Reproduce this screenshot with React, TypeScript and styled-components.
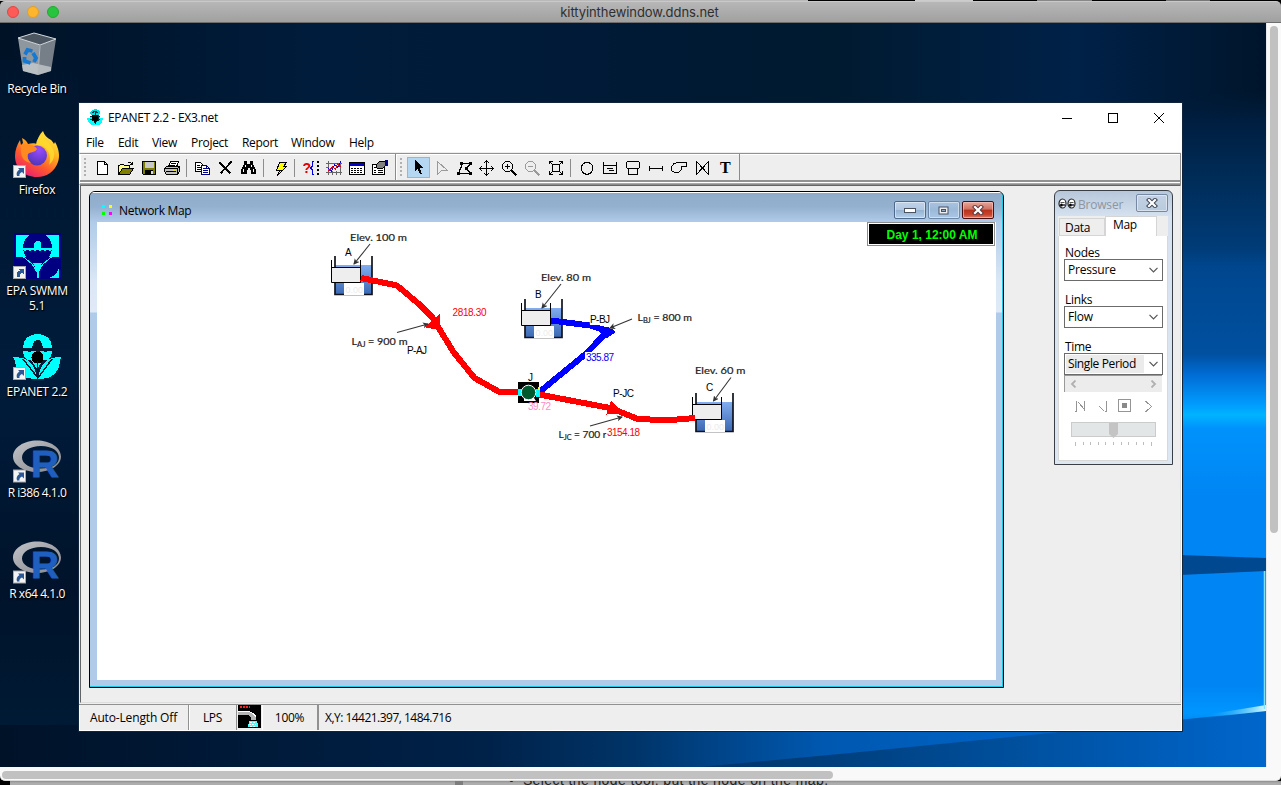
import React from 'react';
import styled, { createGlobalStyle } from 'styled-components';

const GlobalStyle = createGlobalStyle`
  * { box-sizing: border-box; }
  body { margin: 0; overflow: hidden; background: #000; }
`;

const ui = `"Open Sans", "Noto Sans", sans-serif`;

/* ---------- host screen ---------- */

const Screen = styled.div`
  width: 1281px;
  height: 785px;
  display: flex;
  flex-direction: column;
  overflow: hidden;
  background: #000;
  font-family: ${ui};
  font-size: 12px;
  color: #000;
`;

const TopSliver = styled.div`
  height: 1px;
  flex: none;
  background: linear-gradient(90deg, #b9b9b9 0 808px, #000 808px 915px, #ccc 915px 973px, #000 973px 1037px, #888 1037px 1092px, #000 1092px 1166px, #777 1166px 1210px, #000 1210px);
`;

const MacBar = styled.div`
  height: 22px;
  flex: none;
  display: flex;
  align-items: center;
  padding-left: 7px;
  border-radius: 5px 5px 0 0;
  border-top: 1px solid #c9c9c9;
  border-bottom: 1px solid #6e6e6e;
  background: linear-gradient(#b7b7b7, #a0a0a0);
`;

const Light = styled.span<{ $c: string; $b: string }>`
  width: 12px;
  height: 12px;
  margin-right: 8px;
  border-radius: 50%;
  background: ${(p) => p.$c};
  border: 1px solid ${(p) => p.$b};
`;

const MacTitle = styled.div`
  flex: 1;
  text-align: center;
  padding-right: 72px;
  margin-left: 3px;
  font: 13px Inter, sans-serif;
  letter-spacing: -0.07px;
  color: #2f2f2f;
`;

const Body = styled.div`
  height: 744px;
  flex: none;
  display: flex;
`;

const Desktop = styled.div`
  position: relative;
  width: 1266px;
  height: 744px;
  overflow: hidden;
`;

const VTrack = styled.div`
  width: 15px;
  background: #f9f9f9;
  border-left: 1px solid #e9e9e9;
  padding: 3px 3px;
`;

const VThumb = styled.div`
  width: 8px;
  height: 507px;
  border-radius: 4px;
  background: #c1c1c1;
`;

const HTrack = styled.div`
  height: 14px;
  flex: none;
  background: #f9f9f9;
  border-bottom: 1px solid #dcdcdc;
  border-radius: 0 0 5px 5px;
  padding: 4px 2px;
`;

const HThumb = styled.div`
  width: 831px;
  height: 8px;
  border-radius: 4px;
  background: #c1c1c1;
`;

const Under = styled.div`
  height: 4px;
  flex: none;
  margin-left: 10px;
  overflow: hidden;
  display: flex;
  align-items: flex-end;
  background: linear-gradient(#8d8d8d, #adadad 2px);
`;

const UnderDivider = styled.div`
  width: 8px;
  height: 4px;
  margin-left: 445px;
  background: #7d7d7d;
`;

const UnderText = styled.div`
  margin-left: 46px;
  white-space: pre;
  font: 14px/14px "Liberation Sans", sans-serif;
  letter-spacing: 0.4px;
  color: #222;
  margin-bottom: -2px;
`;

/* ---------- desktop icons ---------- */

const IconColumn = styled.div`
  position: relative;
  display: flex;
  flex-direction: column;
  width: 74px;
  padding-top: 7px;
`;

const IconCell = styled.div`
  height: 101px;
  display: flex;
  flex-direction: column;
  align-items: center;
`;

const IconLabel = styled.div<{ $ls?: number }>`
  margin-top: 3px;
  text-align: center;
  line-height: 15px;
  color: #fff;
  white-space: pre-line;
  letter-spacing: ${(p) => p.$ls ?? -0.3}px;
  text-shadow: 1px 1px 1px #000, 0 1px 2px #000;
`;

const Shortcut = ({ y = 0 }: { y?: number }) => (
  <g transform={`translate(0 ${y})`}>
    <rect x="0.5" y="34.5" width="12" height="12" fill="#f4f4f4" stroke="#a8a8a8" />
    <path d="M5 37h6v6l-2-2c-2 1-3 2-2.500 4h-2.500c-1-3 0-5 2.500-6.500z" fill="#2b5797" />
  </g>
);

const RecycleBin = () => (
  <svg width="48" height="48" viewBox="0 0 48 48">
    <path d="M5 8 L27 15 L25 45 L10 41z" fill="#8e969e" />
    <path d="M27 15 L43 9 L38 41 L25 45z" fill="#767e87" />
    <path d="M5 8 L21 3 L43 9 L27 15z" fill="#4c5660" stroke="#d4d9dd" strokeWidth="1" />
    <path d="M9 35 L20 33 L38 37 L38 41 L25 45 L10 41z" fill="#c9cdd0" opacity=".75" />
    <path d="M25 44 L27 16" stroke="#b5bbc0" strokeWidth="1" />
    <g fill="none" stroke="#1579d3" strokeWidth="3.800">
      <path d="M12 24.500 l2.500-4.500 5 1" />
      <path d="M20 23 l3 5 -2 4" />
      <path d="M17.500 33 l-6-2 0-4" />
    </g>
  </svg>
);

const Firefox = () => (
  <svg width="48" height="48" viewBox="0 0 48 48">
    <defs>
      <linearGradient id="ffa" x1=".8" y1="0" x2=".2" y2="1">
        <stop offset="0" stopColor="#fff24a" />
        <stop offset=".35" stopColor="#ffb31f" />
        <stop offset=".65" stopColor="#ff5a2c" />
        <stop offset="1" stopColor="#e6177a" />
      </linearGradient>
      <radialGradient id="ffb" cx=".6" cy=".2" r=".8">
        <stop offset="0" stopColor="#9a4bff" />
        <stop offset="1" stopColor="#5136b8" />
      </radialGradient>
    </defs>
    <path d="M30 0c1 4 4 7 8 9 1 1 2 2 3 4l1-2c4 7 5 14 3 20-3 9-11 15-21 15C11 46 2 37 2 25c0-6 2-11 5-16l1 5 2-2-1-5c4 2 5 4 6 6 3-1 7-1 9 0 0-5 3-10 6-13z" fill="url(#ffa)" />
    <circle cx="24" cy="24.500" r="10" fill="url(#ffb)" />
    <path d="M8 14c6-2 14 0 16 4-2 4-8 3-9 5-1 3 0 6 3 9-6-1-10-5-10-11z" fill="#ff8a1f" />
    <path d="M30 2c0 7 9 10 11 19 1 6-2 10-5 13 2-6 1-14-5-18-3-2-6-2-8-2 0-4 3-9 7-12z" fill="#ffd92e" opacity=".85" />
    <Shortcut />
  </svg>
);

const Swmm = () => (
  <svg width="48" height="48" viewBox="0 0 48 48" shapeRendering="crispEdges">
    <rect x="1" y="1" width="47" height="46" fill="#000080" />
    <path d="M3 3h43v22H3z" fill="#0ff" />
    <path d="M3 25h6l12 6h7l12-6h6v-1l-43 0zM3 24h43v2c-8 1-14 6-18 11l-3 9h-1l-3-9C17 31 11 27 3 26z" fill="#000080" />
    <circle cx="24.500" cy="15.500" r="14.500" fill="#000080" />
    <path d="M10 16h11v-5l2-2h3l2 2v5h11v2h-1v1h-2v-1h-3v1h-2v-1h-3v1h-2v-1h-3v1h-2v-1h-3v1h-2v-1h-3v1h-2v-1h-1z" fill="#0ff" />
    <path d="M8 23l5 4 6 5 5 8M41 23l-5 4-6 5-5 8" stroke="#0ff" strokeWidth="1" fill="none" />
    <path d="M20 31h9l-3 9v6h-2v-6z" fill="#0ff" />
    <path d="M46 35v11H36c5-2 9-5 10-11z" fill="#0ff" />
    <Shortcut />
  </svg>
);

const EpaFlower = () => (
  <g shapeRendering="crispEdges">
    <path d="M10 15C10 6 16 1 24.500 1S39 6 39 15h-9l-2-7h-7l-2 7z" fill="#0ff" />
    <path d="M10 18h5v1h3v-1h13v1h3v-1h5c0 4-2 7-4 9h-5l-6 9-6-9h-4c-2-2-4-5-4-9z" fill="#0ff" />
    <path d="M0 24c14 0 22 5 24 22-14 1-22-7-22-18zM48 24c-13 0-21 5-23 22 14 1 22-7 22-18z" fill="#0ff" />
    <path d="M21 15v-6l2-2h3l2 2v8l-3 3-4-3z" fill="#06182c" />
    <circle cx="24.500" cy="24.500" r="6" fill="#000" />
    <path d="M10 26l15 19M39 26L25 45M24.500 28v18" stroke="#06182c" strokeWidth="1.500" fill="none" />
  </g>
);

const Epanet = () => (
  <svg width="48" height="48" viewBox="0 0 48 48">
    <EpaFlower />
    <Shortcut />
  </svg>
);

const TitleFlower = () => (
  <svg width="16" height="17" viewBox="0 0 16 17" shapeRendering="crispEdges">
    <path d="M3 5V3l2-2 3-1 3 1 2 2v2l-2 1H5z" fill="#0dd" />
    <path d="M0 9h3l1-2h8l1 2h3l-1 4-3 3H4l-3-3z" fill="#0ff" />
    <path d="M5 6h6v5H9v2H7v-2H5zM8 3v12M3 10l3 2M13 10l-3 2" fill="#000" stroke="#000" strokeWidth=".8" />
    <path d="M5 4l3-2 3 2M3 7h2M11 7h2" stroke="#035" fill="none" />
  </svg>
);

const LogoSvg = styled.svg`
  overflow: visible;
`;

const RLogo = () => (
  <LogoSvg width="48" height="48" viewBox="0 1.500 48 48">
    <defs>
      <linearGradient id="rg" x1="0" y1="0" x2="1" y2="1">
        <stop offset="0" stopColor="#c2c4c9" />
        <stop offset="1" stopColor="#84868c" />
      </linearGradient>
    </defs>
    <path fillRule="evenodd" d="M24 8c13 0 24 7 24 16s-11 15.500-24 15.500S0 33 0 24 11 8 24 8zM28 13.500c-11 0-19 5-19 11.500s8 11 19 11 18-4.500 18-11-7-11.500-18-11.500z" fill="url(#rg)" />
    <text x="18" y="44.500" textLength="28" lengthAdjust="spacingAndGlyphs" fontFamily="Liberation Sans, sans-serif" fontWeight="700" fontSize="37" fill="#1f5fbf" stroke="#1f5fbf" strokeWidth=".8">R</text>
    <Shortcut y={3} />
  </LogoSvg>
);

const Wallpaper = styled.svg`
  position: absolute;
  inset: 0;
`;

const Backdrop = () => (
  <Wallpaper width="1266" height="744" viewBox="0 23 1266 744">
    <defs>
      <linearGradient id="top" x1="0" x2="1">
        <stop offset="0" stopColor="#001226" />
        <stop offset=".25" stopColor="#001c3c" />
        <stop offset=".5" stopColor="#001a36" />
        <stop offset=".66" stopColor="#001a30" />
        <stop offset=".85" stopColor="#002148" />
        <stop offset="1" stopColor="#00152b" />
      </linearGradient>
      <linearGradient id="left" x1="0" x2="0" y1="0" y2="1">
        <stop offset="0" stopColor="#00152c" />
        <stop offset=".45" stopColor="#001c3c" />
        <stop offset=".75" stopColor="#00132a" />
        <stop offset="1" stopColor="#001c38" />
      </linearGradient>
      <linearGradient id="right" gradientUnits="userSpaceOnUse" x1="0" x2="0" y1="90" y2="767">
        <stop offset="0" stopColor="#001a35" stopOpacity="0" />
        <stop offset=".04" stopColor="#001d3e" />
        <stop offset=".13" stopColor="#002c58" />
        <stop offset=".235" stopColor="#003c78" />
        <stop offset=".26" stopColor="#00468e" />
        <stop offset=".39" stopColor="#0050a0" />
        <stop offset=".42" stopColor="#006cd4" />
        <stop offset=".465" stopColor="#009cff" />
        <stop offset=".48" stopColor="#00b4ff" />
        <stop offset=".5" stopColor="#0092fc" />
        <stop offset=".6" stopColor="#0086f4" />
        <stop offset=".88" stopColor="#0086f4" />
        <stop offset=".92" stopColor="#0096ff" />
        <stop offset=".95" stopColor="#0076e2" />
        <stop offset="1" stopColor="#0058b0" />
      </linearGradient>
      <linearGradient id="bottom" x1="0" x2="1">
        <stop offset="0" stopColor="#001228" />
        <stop offset=".38" stopColor="#002148" />
        <stop offset=".5" stopColor="#003468" />
        <stop offset=".65" stopColor="#0058b0" />
        <stop offset=".8" stopColor="#0062c4" />
        <stop offset="1" stopColor="#0074e0" />
      </linearGradient>
      <linearGradient id="beam" x1="0" x2="1">
        <stop offset="0" stopColor="#003468" />
        <stop offset=".45" stopColor="#004a92" />
        <stop offset="1" stopColor="#0066cc" />
      </linearGradient>
      <linearGradient id="flare" x1="0" x2="1">
        <stop offset="0" stopColor="#00a8ff" stopOpacity="0" />
        <stop offset="1" stopColor="#d8fbff" />
      </linearGradient>
    </defs>
    <rect y="23" width="1266" height="744" fill="url(#left)" />
    <rect y="23" width="1266" height="120" fill="url(#top)" />
    <rect x="0" y="60" width="79" height="707" fill="url(#left)" />
    <rect y="725" width="1266" height="42" fill="url(#bottom)" />
    <rect x="1180" y="90" width="86" height="677" fill="url(#right)" />
    <path d="M700 767L850 753 1050 733 1266 711V767z" fill="url(#beam)" />
    <path d="M1180 555l86 3v13l-86 4z" fill="#00488f" />
    <path d="M1205 715L1266 705v6L1205 718z" fill="url(#flare)" />
    <path d="M1264.500 571v138" stroke="#7fe0ff" strokeWidth="1.500" />
  </Wallpaper>
);

/* ---------- application window ---------- */

const AppWindow = styled.div`
  position: absolute;
  left: 79px;
  top: 80px;
  width: 1103px;
  height: 628px;
  display: flex;
  flex-direction: column;
  background: #eee;
  border-right: 1px solid #fff;
  border-bottom: 1px solid #fff;
  box-shadow: 0 0 0 1px #10243c;
`;

const TitleBar = styled.div`
  height: 29px;
  flex: none;
  display: flex;
  align-items: center;
  padding-left: 8px;
  background: #fff;
`;

const Text = styled.span<{ $ls?: number; $w?: number; $c?: string }>`
  white-space: pre;
  letter-spacing: ${(p) => p.$ls ?? -0.3}px;
  ${(p) => (p.$w ? `width: ${p.$w}px; flex: none;` : '')}
  ${(p) => (p.$c ? `color: ${p.$c};` : '')}
`;

const TitleText = styled(Text)`
  margin-left: 5px;
`;

const CaptionButtons = styled.div`
  margin-left: auto;
  margin-right: -1px;
  display: flex;
`;

const CaptionButton = styled.div`
  width: 46px;
  height: 28px;
  display: flex;
  align-items: center;
  justify-content: center;
`;

const MenuBar = styled.div`
  height: 20px;
  flex: none;
  display: flex;
  align-items: center;
  padding: 1px 0 0 7px;
  background: #fff;
`;

const ToolBand = styled.div`
  height: 32px;
  flex: none;
  margin-top: 1px;
  display: flex;
  align-items: flex-start;
  border-top: 1px solid #919191;
  border-left: 1px solid #fff;
  border-bottom: 1px solid #8b8b8b;
  border-right: 1px solid #919191;
  padding-bottom: 1px;
  background: linear-gradient(#fff 1px, #eee 1px 26px, #919191 26px 28px, #fff 28px 29px, #aaa 29px);
`;

const ToolGroup = styled.div<{ $tight?: boolean }>`
  height: 26px;
  display: flex;
  align-items: flex-start;
  padding: 3px ${(p) => (p.$tight ? 3 : 4)}px 0 3px;
  border-right: 1px solid #8b8b8b;
  box-shadow: inset 1px 0 0 #fff;
`;

const Grip = styled.div`
  width: 2px;
  height: 19px;
  margin: 1px 5px 0 1px;
  background: repeating-linear-gradient(#b0b0b0 0 2px, transparent 2px 4px);
`;

const ToolButton = styled.div<{ $on?: boolean; $slim?: boolean }>`
  width: ${(p) => (p.$slim ? 22 : 23)}px;
  height: 21px;
  display: flex;
  align-items: center;
  justify-content: center;
  background: ${(p) => (p.$on ? '#b5d7f1' : 'transparent')};
  box-shadow: ${(p) => (p.$on ? 'inset 0 0 0 1px #86bbe9' : 'none')};
`;

const ToolSep = styled.div`
  width: 8px;
  height: 18px;
  margin-top: 2px;
  background: linear-gradient(90deg, transparent 3px, #8d8d8d 3px 4px, transparent 4px);
`;

const K = '#000';
const G = '#9a9a9a';

const Lines = ({ d, c = K, w = 1, f = 'none' }: { d: string; c?: string; w?: number; f?: string }) => (
  <path d={d} stroke={c} strokeWidth={w} fill={f} />
);

const toolIcons: Record<string, React.ReactNode> = {
  new: <Lines d="M2.500 1.500h7l3 3v10h-10zM9.500 1.500v3h3" f="#fff" />,
  open: (
    <>
      <Lines d="M.5 13.500v-8h1l1-1h3l1 1h5v3" f="#ffff80" />
      <Lines d="M.5 14.500l4-6h11l-4 6z" f="#808000" />
      <Lines d="M9.500 3.500l1-1h2l2 2M14.500 1.500v3h-3" />
    </>
  ),
  save: (
    <>
      <Lines d="M1.500 1.500h13v13h-12l-1-1z" f="#808000" />
      <rect x="4" y="2" width="9" height="6" fill="#c8c8c8" />
      <rect x="4" y="10" width="8" height="4" fill="#000" />
      <rect x="10" y="11" width="2" height="3" fill="#ddd" />
    </>
  ),
  print: (
    <>
      <Lines d="M4.500 7l2-5.500h8l-2 5.500" f="#fff" />
      <Lines d="M7 3.500h5M6 5.500h5" />
      <Lines d="M.5 8.500l2-2h12l1 2v3l-2 3h-11l-2-3z" f="#c0c0c0" />
      <Lines d="M.5 8.500h13v6M2 11.500h10M13.500 8.500l2-2" />
      <rect x="9" y="10" width="2" height="1" fill="#e8e800" />
    </>
  ),
  copy: (
    <>
      <Lines d="M.5 2.500h5l3 3v6h-8z" f="#fff" />
      <Lines d="M2 5.500h3M2 7.500h5M2 9.500h5" />
      <Lines d="M6.500 5.500h5l3 3v6h-8z" c="#000080" f="#fff" />
      <Lines d="M8 8.500h3M8 10.500h5M8 12.500h5M11.500 5.500v3h3" c="#000080" />
    </>
  ),
  del: <Lines d="M1.500 2.500l11 11M13.500 1.500L2.500 13.500" w={1.7} />,
  find: (
    <>
      <path d="M3 1h3v3h3V1h3v3l3 6v4h-5v-4h-1V8H7v2H6v4H0v-4l3-6z" fill="#000" />
      <path d="M4 5h1v2H4zM2 9h1v3H2zM10 5h1v2h-1zM12 9h1v3h-1z" fill="#fff" />
    </>
  ),
  run: (
    <>
      <Lines d="M7.500 2.500h7l-3 4h3l-9 9 2-5h-3z" f="#ffff00" />
      <Lines d="M14.500 3v-1M8 10.500h3" />
    </>
  ),
  query: (
    <>
      <text x="-.5" y="13" fontFamily="Liberation Sans, sans-serif" fontWeight="700" fontSize="14" fill="#e00000">?</text>
      <Lines d="M11 1.500h-2v5l-1.500 1.500 1.500 1.500v5h2" c="#0000e0" />
      <path d="M14 1h2v2h-2zM14 5h2v2h-2zM14 9h2v2h-2zM14 13h2v2h-2z" fill="#000" />
    </>
  ),
  graph: (
    <>
      <Lines d="M2.500 1v14M0 12.500h16M0 3.500h16M0 7.500h2M6.500 11v4M10.500 11v4M14.500 1v14" c="#666" />
      <Lines d="M2.500 8.500l3 3 3-7 3 3 3.500-6" c="#0000d8" />
      <Lines d="M2.500 11l4-4 3 2 2-5 3 3" c="#e00000" />
    </>
  ),
  table: (
    <>
      <rect x=".5" y="2.500" width="15" height="12" fill="#fff" stroke="#000" />
      <rect x="1" y="3" width="14" height="3" fill="#0000c8" />
      <path d="M2 8.500h12M2 10.500h12M2 12.500h12" stroke="#000" strokeDasharray="2 1" />
    </>
  ),
  options: (
    <>
      <Lines d="M.5 4.500h12v10h-12z" f="#fff" />
      <Lines d="M2 7.500h2M2 10.500h2M2 12.500h2M6 10.500h5M6 12.500h5" />
      <path d="M4 5l4-4h5v5l-2 2H7L5 8z" fill="#808080" stroke="#000" />
      <rect x="13" y="0" width="3" height="6" fill="#000080" />
    </>
  ),
  pick: <path d="M4 0v11l2.500-2.500L9 14h2L9 8h3z" fill="#000" />,
  vertex: <Lines d="M3.500 1.500v13l4-4h6z" c={G} />,
  region: (
    <>
      <Lines d="M4.500 3.500h9l-4 5 4 5h-12l4-10" w={1.300} />
      <path d="M3 2h3v3H3zM12 2h3v3h-3zM8 7h3v3H8zM12 12h3v3h-3zM0 12h3v3H0z" fill="#000" />
    </>
  ),
  pan: <Lines d="M7.500 0.500v15M0 8.500h15M5 3l2.500-2.500L10 3M5 13l2.500 2.500L10 13M3 6L.5 8.500 3 11M12 6l2.500 2.500L12 11" />,
  zin: (
    <>
      <Lines d="M3.500 1.500h4l3 3v4l-3 3h-4l-3-3v-4zM5.500 4v5M3 6.500h5" />
      <Lines d="M9.500 10.500l5 5" w={2.400} />
    </>
  ),
  zout: (
    <>
      <Lines d="M3.500 1.500h4l3 3v4l-3 3h-4l-3-3v-4zM3 6.500h5" c={G} />
      <Lines d="M9.500 10.500l5 5" w={2.400} c={G} />
    </>
  ),
  full: (
    <>
      <Lines d="M4.500 4.500h7v7h-7z" />
      <Lines d="M1.500 4v-2.500h3M11 1.500h3.500V4M1.500 11v3.500h3M11 14.500h3.500V11M1.500 1.500l3 3M14.500 1.500l-3 3M1.500 14.500l3-3M14.500 14.500l-3-3" />
    </>
  ),
  junction: <Lines d="M6.500 2.500h3l2 1 2 2 .5 3-.5 2-2 2.500-2 1h-3l-2-1-2-2.500V6l2-2.500z" />,
  reservoir: <Lines d="M1.500 2v11.500h13V2M1 5.500h13M5 8.500h6M7 10.500h5" />,
  tank: <Lines d="M2.500 1.500h11l1 1v5l-1 1h-11l-1-1v-5zM3.500 9v5.500h9V9" />,
  pipe: <Lines d="M1.500 5.500v5M1.500 8h12M14.500 5.500v5" />,
  pump: <Lines d="M6.500 2.500h9v4h-5v3l-3 3h-4l-3-2V7l2-3z" />,
  valve: <Lines d="M2.500 1.500v13l6-6.500 6 6.500v-13L8.500 8z" />,
  text: (
    <text x="3" y="13" fontFamily="Liberation Serif, serif" fontWeight="700" fontSize="16" fill="#000">T</text>
  ),
};

const Tool = ({ name, on }: { name: string; on?: boolean }) => (
  <ToolButton $on={on} $slim={name === 'pan'}>
    <svg width="16" height="16" viewBox="0 0 16 16" shapeRendering="crispEdges">{toolIcons[name]}</svg>
  </ToolButton>
);

const Tools = ({ names, active }: { names: string[]; active?: string }) => (
  <ToolGroup $tight={!!active}>
    <Grip />
    {names.map((n, i) => (n === '|' ? <ToolSep key={i} /> : <Tool key={i} name={n} on={n === active} />))}
  </ToolGroup>
);

const Client = styled.div`
  position: relative;
  flex: 1;
  margin-left: 1px;
  border-top: 1px solid #646464;
  border-left: 1px solid #646464;
  border-bottom: 1px solid #ddd;
  border-right: 1px solid #ddd;
`;

/* ---------- network map child window ---------- */

const MapWindow = styled.div`
  position: absolute;
  left: 8px;
  top: 5px;
  width: 915px;
  height: 497px;
  display: flex;
  flex-direction: column;
  border: 1px solid #000;
  border-radius: 6px 6px 0 0;
  overflow: hidden;
  background: linear-gradient(#fff 0 1px, #8eacca 1px, #b0cbe9 30px, #dbe7f5 90px, #e0eaf7 120px, #b0cbe9 121px);
  box-shadow: inset -1px -1px 0 #1cc8e8;
`;

const Frame = styled.div`
  flex: 1;
  display: flex;
  flex-direction: column;
  border-right: 1px solid #1cc8e8;
  border-bottom: 1px solid #1cc8e8;
`;

const MapTitle = styled.div`
  height: 30px;
  flex: none;
  display: flex;
  align-items: flex-start;
  padding: 9px 8px 0 10px;
  background: linear-gradient(#fff 0 1px, #8eacca 1px, #94b1cf 50%, #b0cbe9);
`;

const MapTitleText = styled(Text)`
  margin: 1px 0 0 6px;
`;

const WinButtons = styled.div`
  margin-left: auto;
  display: flex;
  gap: 2px;
`;

const WinButton = styled.div<{ $kind?: 'close' | 'flat' }>`
  width: 32px;
  height: 18px;
  display: flex;
  align-items: center;
  justify-content: center;
  border: 1px solid ${(p) => (p.$kind === 'close' ? '#4a0d12' : p.$kind === 'flat' ? '#6c87a8' : '#4d6a8d')};
  border-radius: 2px;
  box-shadow: inset 0 0 0 1px ${(p) => (p.$kind === 'close' ? 'rgba(255,200,190,.6)' : 'rgba(255,255,255,.45)')};
  background: ${(p) =>
    p.$kind === 'close'
      ? 'linear-gradient(#e5a79b, #d1705f 45%, #b8301b 50%, #c8452d 80%, #d98070)'
      : p.$kind === 'flat'
      ? 'linear-gradient(#a9c3e0, #9cb9d9 50%, #a9c6e6)'
      : 'linear-gradient(#bfd3ea, #b0c8e3 48%, #94b1d1 50%, #b4cfec)'};
`;

const Canvas = styled.div`
  height: 458px;
  flex: none;
  margin: 0 6px 0 7px;
  background: #fff;
  position: relative;
`;

const DayLabel = styled.div`
  position: absolute;
  right: 1px;
  top: 0;
  width: 128px;
  height: 24px;
  display: flex;
  align-items: center;
  justify-content: center;
  padding: 1px 0 0 2px;
  border: 1px solid #8c8c8c;
  box-shadow: inset 0 0 0 1px #fff;
  background: #000;
  color: #0f0;
  font: bold 12px "Liberation Sans", sans-serif;
`;

const Diagram = styled.svg`
  display: block;
`;

const Tank = ({ x, y }: { x: number; y: number }) => (
  <g transform={`translate(${x} ${y})`}>
    <rect x="4" y="9" width="37" height="29" fill="url(#water)" />
    <path d="M4 0v38.500h37V0" fill="none" stroke="#10131c" strokeWidth="1.700" />
    <rect x="13" y="27" width="20" height="12" fill="#fff" />
    <text x="14.500" y="36.500" fontSize="9" fill="#ececec" textLength="17.500">0.00</text>
    <path d="M.5 4v22.500h29V4M.5 11.500h29" fill="none" stroke="#000" />
    <rect x="1" y="12" width="28" height="14" fill="#eee" />
  </g>
);

const Note = ({ x, y, w, t, sub, rest }: { x: number; y: number; w: number; t: string; sub?: string; rest?: string }) => (
  <text x={x} y={y} textLength={w} lengthAdjust="spacingAndGlyphs" fontFamily="Lato, sans-serif" fontSize="10" fill="#222" stroke="#222" strokeWidth=".2">
    {t}
    {sub && <tspan fontSize="7" dy="2">{sub}</tspan>}
    {rest && <tspan dy="-2">{rest}</tspan>}
  </text>
);

const Arrow = ({ d }: { d: string }) => <path d={d} stroke="#333" strokeWidth="1.100" fill="none" markerEnd="url(#tip)" />;

const Network = () => (
  <Diagram width="899" height="458" viewBox="97 222 899 458" fontFamily="Liberation Sans, sans-serif" fontSize="10">
    <defs>
      <linearGradient id="water" x1="0" x2="0" y1="0" y2="1">
        <stop offset="0" stopColor="#82adf0" />
        <stop offset="1" stopColor="#3b69b3" />
      </linearGradient>
      <marker id="tip" markerWidth="7" markerHeight="7" refX="5" refY="3" orient="auto" markerUnits="userSpaceOnUse">
        <path d="M0 0L6 3 0 6 1.500 3z" fill="#333" />
      </marker>
    </defs>
    <Tank x={331} y={256} />
    <Tank x={521} y={299} />
    <Tank x={692} y={393} />
    <Note x={350} y={240.500} w={57} t="Elev. 100 m" />
    <Note x={541} y={281} w={50} t="Elev. 80 m" />
    <Note x={695} y={374} w={50.500} t="Elev. 60 m" />
    <Note x={351.500} y={344.500} w={56} t="L" sub="AJ" rest=" = 900 m" />
    <Note x={637.500} y={320.500} w={54.500} t="L" sub="BJ" rest=" = 800 m" />
    <Note x={558.500} y={437.500} w={48} t="L" sub="JC" rest=" = 700 r" />
    <g shapeRendering="crispEdges">
      <path d="M361 278l36 7.500 23 19.500 12 12 21.500 35 21 26 25 14h20" fill="none" stroke="#f00" strokeWidth="6" />
      <path d="M439 315v8l2 7-15-3z" fill="#f00" stroke="#f00" />
      <path d="M551 320.500l39 5 18 5.500-23 23.500-45 37" fill="none" stroke="#00f" strokeWidth="6" />
      <path d="M600 328l8-1 8 5-9 6-6-1z" fill="#00f" />
      <path d="M539 394.500l29 5.500 42 8 13 5 13.500 5.500 13.500 1h27l18-1.500" fill="none" stroke="#f00" strokeWidth="6" />
      <path d="M611 401l12 12-16.500 1.500z" fill="#f00" />
    </g>
    <Arrow d="M370 244L354 264" />
    <Arrow d="M561 284L542 308" />
    <Arrow d="M731 377.500L713.500 401" />
    <Arrow d="M397 332.500L428 324" />
    <Arrow d="M632 319L610 328" />
    <Arrow d="M590 426L622 417" />
    <rect x="518" y="382" width="21" height="21" fill="#000" />
    <path d="M518 389h4v7h-4zM536 389h4v8h-4z" fill="#0ff" />
    <path d="M524 398h10l2 3h-12z" fill="#fff" />
    <path d="M538 387h2v3h-2z" fill="#ff0" />
    <circle cx="528.500" cy="392.500" r="7.300" fill="#005a2d" stroke="#fff" strokeWidth="1" />
    <path d="M589 315h21v10h-20zM585 352h29v10h-29zM606.500 427h34v10h-34z" fill="#fff" />
    <text x="345" y="255.500">A</text>
    <text x="535" y="298">B</text>
    <text x="706" y="391">C</text>
    <text x="528" y="381">J</text>
    <text x="407" y="354" textLength="20">P-AJ</text>
    <text x="590" y="323" textLength="20">P-BJ</text>
    <text x="613" y="397" textLength="21">P-JC</text>
    <text x="452.500" y="316" fill="#f00" textLength="34">2818.30</text>
    <text x="586" y="361" fill="#00f" textLength="28">335.87</text>
    <text x="607" y="435.500" fill="#f00" textLength="33">3154.18</text>
    <text x="528" y="410" fill="#ff8ac8" textLength="23">39.72</text>
  </Diagram>
);

/* ---------- browser palette ---------- */

const Palette = styled.div`
  position: absolute;
  left: 973px;
  top: 4px;
  width: 119px;
  height: 275px;
  display: flex;
  flex-direction: column;
  padding: 0 4px 3px 3px;
  border: 1px solid #3a3f47;
  border-radius: 6px 6px 0 0;
  background: linear-gradient(#b7c7da, #d6e2f0 26px, #dde7f3);
`;

const PaletteTitle = styled.div`
  height: 25px;
  flex: none;
  display: flex;
  align-items: center;
`;

const PaletteName = styled(Text)`
  margin: 1px 0 0 2px;
`;

const PaletteClose = styled(WinButton)`
  margin: -1px 0 0 auto;
  border-color: #7688a2;
  background: linear-gradient(#c3d2e4, #b8cade);
`;

const Tabs = styled.div`
  height: 20px;
  flex: none;
  display: flex;
  align-items: flex-end;
  background: #eee;
`;

const Tab = styled.div<{ $on?: boolean }>`
  width: ${(p) => (p.$on ? 52 : 46)}px;
  height: ${(p) => (p.$on ? 20 : 18)}px;
  line-height: 16px;
  padding: ${(p) => (p.$on ? '0 0 0 7px' : '1px 0 0 5px')};
  margin-left: ${(p) => (p.$on ? 0 : 1)}px;
  background: ${(p) => (p.$on ? '#fff' : '#eee')};
  border: 1px solid #d5d5d5;
  border-bottom: ${(p) => (p.$on ? 'none' : '1px solid #d5d5d5')};
`;

const Page = styled.div`
  flex: 1;
  display: flex;
  flex-direction: column;
  padding: 7px 4px 0 5px;
  background: #fff;
  border: 1px solid #d8d8d8;
  border-top: none;
`;

const Field = styled.div`
  height: 47px;
  flex: none;
  display: flex;
  flex-direction: column;
`;

const FieldName = styled(Text)`
  height: 16px;
  line-height: 19px;
  padding-left: 1px;
`;

const Combo = styled.div`
  width: 99px;
  height: 22px;
  display: flex;
  align-items: center;
  justify-content: space-between;
  border: 1px solid #6b6b6b;
  padding: 0 4px 0 1px;
  background: #fff;
`;

const ComboText = styled(Text)<{ $shade?: boolean }>`
  padding: 0 2px;
  width: 78px;
  line-height: 18px;
  background: ${(p) => (p.$shade ? '#ebebeb' : 'transparent')};
`;

const Scroller = styled.div`
  width: 98px;
  height: 17px;
  flex: none;
  margin-top: -9px;
  display: flex;
  align-items: center;
  justify-content: space-between;
  padding: 0 5px;
  background: #ececec;
  border-left: 1px solid #999;
  border-top: 1px solid #999;
`;

const Player = styled.svg`
  display: block;
  margin: 6px 0 0 9px;
  flex: none;
`;

const Slider = styled.svg`
  display: block;
  margin: 8px 0 0 7px;
  flex: none;
`;

const XGlyph = ({ c }: { c: string }) => (
  <svg width="12" height="10" viewBox="0 0 12 10">
    <path d="M3 2l6 6M9 2L3 8" stroke={c} strokeWidth="4.200" strokeLinecap="square" />
    <path d="M3 2l6 6M9 2L3 8" stroke="#fff" strokeWidth="2.200" strokeLinecap="square" />
  </svg>
);

const Select = ({ label, value, shade }: { label: string; value: string; shade?: boolean }) => (
  <Field>
    <FieldName>{label}</FieldName>
    <Combo>
      <ComboText $shade={shade} $ls={shade ? -0.38 : -0.2}>{value}</ComboText>
      <svg width="9" height="6" viewBox="0 0 9 6"><path d="M.5 .8l4 4 4-4" fill="none" stroke="#555" strokeWidth="1.200" /></svg>
    </Combo>
  </Field>
);

const BrowserPalette = () => (
  <Palette>
    <PaletteTitle>
      <svg width="18" height="12" viewBox="0 0 18 12">
        {[0, 9].map((x) => (
          <g key={x} transform={`translate(${x} 0)`}>
            <ellipse cx="4.500" cy="5.500" rx="3.500" ry="4.500" fill="#fff" stroke="#222" strokeWidth="1.200" />
            <path d="M2.500 4.500h4" stroke="#555" strokeWidth="1" />
            <circle cx="3.500" cy="7" r="1.500" fill="#000" />
            <circle cx="6" cy="7" r="1" fill="#224" />
          </g>
        ))}
      </svg>
      <PaletteName $c="#8d96a1" $ls={-0.2}>Browser</PaletteName>
      <PaletteClose><XGlyph c="#3f4755" /></PaletteClose>
    </PaletteTitle>
    <Tabs>
      <Tab><Text>Data</Text></Tab>
      <Tab $on><Text>Map</Text></Tab>
    </Tabs>
    <Page>
      <Select label="Nodes" value="Pressure" />
      <Select label="Links" value="Flow" />
      <Select label="Time" value="Single Period" shade />
      <Scroller>
        <svg width="7" height="8" viewBox="0 0 7 8"><path d="M5.500 .5L2 4l3.500 3.500" fill="none" stroke="#b0b0b0" strokeWidth="1.800" /></svg>
        <svg width="7" height="8" viewBox="0 0 7 8"><path d="M1.500 .5L5 4 1.500 7.500" fill="none" stroke="#b0b0b0" strokeWidth="1.800" /></svg>
      </Scroller>
      <Player width="80" height="16" viewBox="1074 398 80 16">
        <g fill="none" stroke="#959595" shapeRendering="crispEdges">
          <path d="M1077.500 401v10h-2M1079 402l7 8M1085.500 401v10M1100 406l5 5M1107.500 401v10h-2" />
          <rect x="1119.500" y="399.500" width="12" height="12" />
          <path d="M1146.500 401l6 5.500-6 5.500" />
        </g>
        <rect x="1123" y="403" width="5" height="5" fill="#8a8a8a" />
      </Player>
      <Slider width="86" height="26" viewBox="0 0 86 26">
        <rect x=".5" y=".5" width="84" height="14" fill="#e2e6e6" stroke="#cbcbcb" />
        <path d="M38 1h9v11l-4.500 4-4.500-4z" fill="#c4c4c4" />
        {Array.from({ length: 11 }, (_, i) => (
          <rect key={i} x={4 + Math.round(i * 7.6)} y="20" width="1" height={i % 10 === 0 ? 4 : 3} fill="#bdbdbd" />
        ))}
      </Slider>
    </Page>
  </Palette>
);

/* ---------- status bar ---------- */

const StatusBar = styled.div`
  height: 26px;
  flex: none;
  margin-top: 1px;
  display: flex;
  border-top: 1px solid #919191;
`;

const Pane = styled.div<{ $w: number; $last?: boolean }>`
  width: ${(p) => p.$w}px;
  flex: none;
  display: flex;
  align-items: center;
  justify-content: ${(p) => (p.$last ? 'flex-start' : 'center')};
  padding-left: ${(p) => (p.$last ? 6 : 0)}px;
  padding-right: ${(p) => (p.$last ? 0 : 1)}px;
  border-left: 1px solid ${(p) => (p.$last ? '#919191' : '#fff')};
  border-right: ${(p) => (p.$last ? 'none' : '1px solid #919191')};
`;

const FaucetPane = styled.div`
  width: 25px;
  flex: none;
  padding-left: 1px;
`;

const Faucet = () => (
  <svg width="23" height="23" viewBox="0 0 23 23" shapeRendering="crispEdges">
    <rect width="23" height="23" fill="#000" />
    <path d="M2 1.500h10" stroke="#f22" strokeWidth="2" strokeDasharray="2 1" />
    <path d="M0 6h11l4 2 3 3v4h-5v-3l-3-2H0z" fill="#b4b4b4" />
    <path d="M0 6.500h11l4 2 3 3" fill="none" stroke="#fff" />
    <path d="M11 16h8v2h1v4H10v-3h1z" fill="#4ff" />
    <path d="M12 17.500h6M11 19.500h7M12 21.500h6" stroke="#fff" strokeDasharray="2 1" />
  </svg>
);

export default function App() {
  return (
    <>
      <GlobalStyle />
      <Screen>
        <TopSliver />
        <MacBar>
          <Light $c="#fc5b57" $b="#e04741" />
          <Light $c="#fdb52d" $b="#e19f24" />
          <Light $c="#27c53f" $b="#1eab2e" />
          <MacTitle>kittyinthewindow.ddns.net</MacTitle>
        </MacBar>
        <Body>
          <Desktop>
            <Backdrop />
            <IconColumn>
              <IconCell><RecycleBin /><IconLabel>Recycle Bin</IconLabel></IconCell>
              <IconCell><Firefox /><IconLabel>Firefox</IconLabel></IconCell>
              <IconCell><Swmm /><IconLabel>{'EPA SWMM\n5.1'}</IconLabel></IconCell>
              <IconCell><Epanet /><IconLabel>EPANET 2.2</IconLabel></IconCell>
              <IconCell><RLogo /><IconLabel $ls={-0.45}>R i386 4.1.0</IconLabel></IconCell>
              <IconCell><RLogo /><IconLabel $ls={-0.45}>R x64 4.1.0</IconLabel></IconCell>
            </IconColumn>
            <AppWindow>
              <TitleBar>
                <TitleFlower />
                <TitleText>EPANET 2.2 - EX3.net</TitleText>
                <CaptionButtons>
                  <CaptionButton>
                    <svg width="10" height="10"><path d="M0 5.500h10" stroke="#000" /></svg>
                  </CaptionButton>
                  <CaptionButton>
                    <svg width="10" height="10"><rect x=".5" y=".5" width="9" height="9" fill="none" stroke="#000" /></svg>
                  </CaptionButton>
                  <CaptionButton>
                    <svg width="10" height="10"><path d="M0 0l10 10M10 0L0 10" stroke="#000" /></svg>
                  </CaptionButton>
                </CaptionButtons>
              </TitleBar>
              <MenuBar>
                <Text $w={32}>File</Text>
                <Text $w={34}>Edit</Text>
                <Text $w={39}>View</Text>
                <Text $w={51}>Project</Text>
                <Text $w={49}>Report</Text>
                <Text $w={58}>Window</Text>
                <Text>Help</Text>
              </MenuBar>
              <ToolBand>
                <Tools names={['new', 'open', 'save', 'print', '|', 'copy', 'del', 'find', '|', 'run', '|', 'query', 'graph', 'table', 'options']} />
                <Tools
                  active="pick"
                  names={['pick', 'vertex', 'region', 'pan', 'zin', 'zout', 'full', '|', 'junction', 'reservoir', 'tank', 'pipe', 'pump', 'valve', 'text']}
                />
              </ToolBand>
              <Client>
                <MapWindow>
                  <Frame>
                    <MapTitle>
                      <svg width="13" height="18" viewBox="0 0 13 18">
                        <path d="M2 4h3v3H2z" fill="#0ff" />
                        <path d="M9 4h3v3H9z" fill="#ff0" />
                        <path d="M2 11h3v3H2z" fill="#0f0" />
                        <path d="M9 11h3v3H9z" fill="#f0f" />
                      </svg>
                      <MapTitleText>Network Map</MapTitleText>
                      <WinButtons>
                        <WinButton>
                          <svg width="12" height="5"><rect x=".5" y=".5" width="11" height="4" fill="#fff" stroke="#4b5361" /></svg>
                        </WinButton>
                        <WinButton $kind="flat">
                          <svg width="12" height="9">
                            <rect x="1" y="1" width="9" height="7" fill="#eee" stroke="#4b5361" />
                            <rect x="3.500" y="3.500" width="4" height="2" fill="#8fa8c6" stroke="#4b5361" />
                          </svg>
                        </WinButton>
                        <WinButton $kind="close"><XGlyph c="#5a3a48" /></WinButton>
                      </WinButtons>
                    </MapTitle>
                    <Canvas>
                      <Network />
                      <DayLabel>Day 1, 12:00 AM</DayLabel>
                    </Canvas>
                  </Frame>
                </MapWindow>
                <BrowserPalette />
              </Client>
              <StatusBar>
                <Pane $w={110}><Text $ls={-0.15}>Auto-Length Off</Text></Pane>
                <Pane $w={48}><Text>LPS</Text></Pane>
                <FaucetPane><Faucet /></FaucetPane>
                <Pane $w={56}><Text>100%</Text></Pane>
                <Pane $w={300} $last><Text $ls={-0.52}>X,Y: 14421.397, 1484.716</Text></Pane>
              </StatusBar>
            </AppWindow>
          </Desktop>
          <VTrack><VThumb /></VTrack>
        </Body>
        <HTrack><HThumb /></HTrack>
        <Under>
          <UnderDivider />
          <UnderText>{'•  Select the node tool, but the node on the map.'}</UnderText>
        </Under>
      </Screen>
    </>
  );
}
